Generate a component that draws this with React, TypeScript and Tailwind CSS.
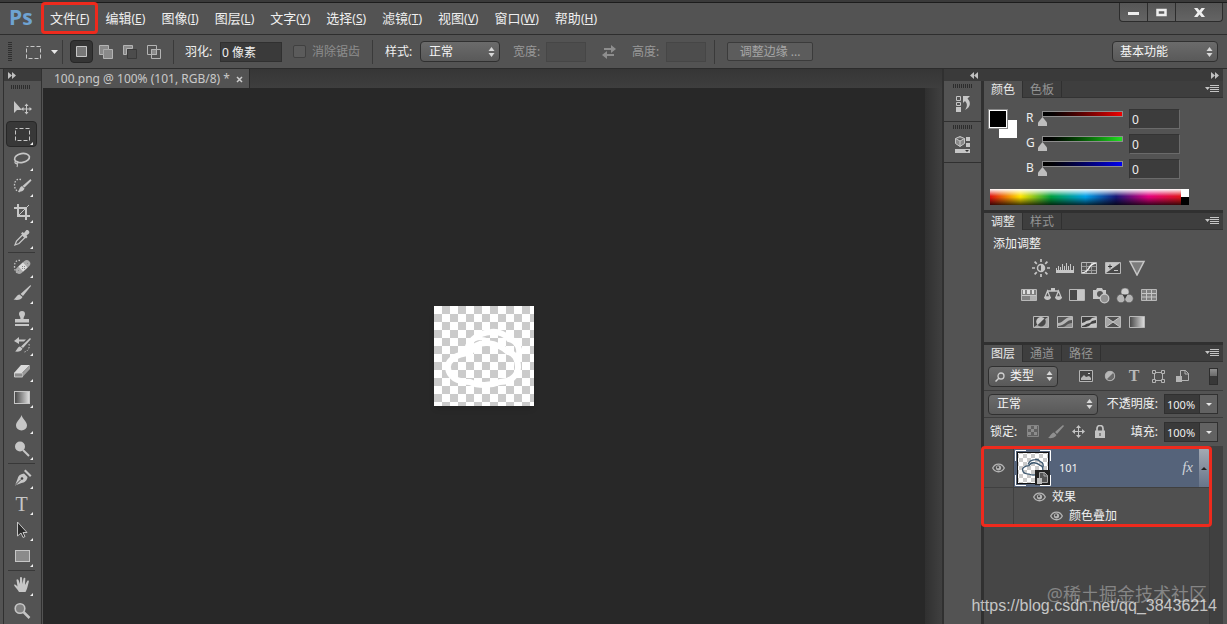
import React from "react";

const Svg = ({ w = 20, h = 20, children }: { w?: number; h?: number; children: React.ReactNode }) => (
  <svg width={w} height={h} viewBox={`0 0 ${w} ${h}`} fill="none" aria-hidden="true" className="block shrink-0">
    {children}
  </svg>
);

const L = "#c6c6c6";

const UpDown = () => (
  <svg width="7" height="10" viewBox="0 0 7 10" aria-hidden="true" className="pointer-events-none absolute right-1 top-1/2 -translate-y-1/2">
    <path d="M3.500 0L6.500 4H.5zM.5 6h6L3.500 10z" fill="#d8d8d8" />
  </svg>
);

function Select({ label, value, className, children }: { label: string; value: string; className: string; children?: React.ReactNode }) {
  return (
    <div className="relative h-[21px] rounded-sm border border-[#303030] bg-linear-to-b from-[#6b6b6b] to-[#595959] text-xs text-[#f4f4f4]">
      {children}
      <select aria-label={label} className={`block h-full appearance-none bg-transparent pr-3 outline-none ${className}`}>
        <option>{value}</option>
      </select>
      <UpDown />
    </div>
  );
}

const Divider = () => <div className="h-6 w-px shrink-0 bg-[#3a3a3a]" />;

const Grip = () => (
  <svg width="20" height="4" viewBox="0 0 20 4" aria-hidden="true" className="mx-auto block">
    {[0, 2, 4, 6, 8, 10, 12, 14, 16, 18].map((x) => (
      <rect key={x} x={x} width="1" height="4" fill="#2c2c2c" />
    ))}
  </svg>
);

/* ---------- tool icons ---------- */
const tools: Record<string, React.ReactNode> = {
  move: (
    <Svg>
      <path d="M2 3v12l3-3h5z" fill={L} />
      <path d="M14.500 7v8M10.500 11h8" stroke={L} />
      <path d="M14.500 5.500l2 2.500h-4zM14.500 16.500l2-2.500h-4zM9 11l2.500-2v4zM20 11l-2.500-2v4z" fill={L} />
    </Svg>
  ),
  marquee: (
    <Svg>
      <rect x="3.500" y="4.500" width="14" height="12" stroke={L} strokeDasharray="4 2" strokeDashoffset="2" />
    </Svg>
  ),
  lasso: (
    <Svg>
      <ellipse cx="10" cy="8" rx="7.500" ry="4.500" stroke={L} strokeWidth="1.700" transform="rotate(-10 10 8)" />
      <path d="M4 11c-2 1-1 3 1 2.500s1-2.500-1-2M5 13.500c.5 1 1 2 0 3.500" stroke={L} strokeWidth="1.200" />
    </Svg>
  ),
  quick: (
    <Svg>
      <path d="M9 3.500C5 2.500 2.500 5 2.500 9S5 16 8 15.500" stroke={L} strokeWidth="1.300" strokeDasharray="1.500 1.500" />
      <path d="M18.500 3l1 1.500-7 7-2-1.500zM10 10l2.500 2.500c-1 3-4 3.500-6.500 3 1.500-1.500 1.500-4.500 4-5.500z" fill={L} />
    </Svg>
  ),
  crop: (
    <Svg>
      <path d="M6 2v12h12M2 6h12v12" stroke={L} strokeWidth="2" />
      <path d="M7 13L17 3" stroke={L} />
    </Svg>
  ),
  eyedropper: (
    <Svg>
      <path d="M3 17l1.500-4 6-6 2.500 2.500-6 6z" stroke={L} strokeWidth="1.300" />
      <path d="M9 5.500l1.500-1.500 1.500 1 2-2.500c1.500-1.500 4.500 1 3 3l-2.500 2 1 1.500-1.500 1.500z" fill={L} />
    </Svg>
  ),
  heal: (
    <Svg>
      <path d="M8 3.500C4.500 3 2.500 5 2.500 9s1 6 3.500 7" stroke={L} strokeWidth="1.300" strokeDasharray="1.500 1.500" />
      <rect x="2.500" y="6.500" width="17" height="7" rx="3.500" fill="#aaa" transform="rotate(-42 11 10)" />
      <rect x="8" y="6.500" width="6" height="7" fill="#dedede" transform="rotate(-42 11 10)" />
      <path d="M10 9h1v1h-1zM12 9h1v1h-1zM10 11h1v1h-1zM12 11h1v1h-1zM6 13h1v1H6zM15 6h1v1h-1z" fill="#888" />
    </Svg>
  ),
  brush: (
    <Svg>
      <path d="M18.500 2l.5 1-8 10-2.500-2zM7.500 11.500l3 2.500c-1 3-5.500 3.500-9 2.500 2.500-1 3-4.500 6-5z" fill={L} />
    </Svg>
  ),
  stamp: (
    <Svg>
      <path d="M10 2a3 3 0 013 3c0 2-1.500 2.500-1.500 5H17v3.500H3V10h5.500C8.500 7.500 7 7 7 5a3 3 0 013-3zM3 15h14v2H3z" fill={L} />
    </Svg>
  ),
  history: (
    <Svg>
      <path d="M2 6l5-4v2.500h7L12 6.500H7V9z" fill={L} />
      <path d="M18 3l1 1-8 9-2-1.500zM8 11.500l2.500 2C9.500 16.500 6 17 3 16.500c2-1 2.500-4.500 5-5z" fill={L} />
      <path d="M17 9c1 4-1 7-4.500 8" stroke={L} strokeDasharray="1.500 1.500" />
    </Svg>
  ),
  eraser: (
    <Svg>
      <path d="M9 4h9l-8 8H2z" fill="#dadada" />
      <path d="M2.500 12h8v4h-8z" fill="#8c8c8c" stroke="#ddd" strokeWidth=".8" />
      <path d="M10.500 12L18 4v4l-7.500 8z" fill="#9c9c9c" />
    </Svg>
  ),
  gradient: (
    <Svg>
      <defs>
        <linearGradient id="gt">
          <stop stopColor="#444" />
          <stop offset="1" stopColor="#e0e0e0" />
        </linearGradient>
      </defs>
      <rect x="2.500" y="4.500" width="15" height="12" fill="url(#gt)" stroke={L} />
    </Svg>
  ),
  blur: (
    <Svg>
      <path d="M9.500 2c1 4 5.500 6.500 5.500 10.500a5.500 5 0 01-11 0C4 8.500 8.500 6 9.500 2z" fill={L} />
    </Svg>
  ),
  dodge: (
    <Svg>
      <circle cx="8" cy="7.500" r="5" fill={L} />
      <path d="M11 11l6 6" stroke={L} strokeWidth="2" />
    </Svg>
  ),
  pen: (
    <Svg>
      <path d="M12 5.500l3.500 3.500c-.5 4-3 5.500-6 6L3 17.500 5.500 11c.5-3 2.500-5 6.500-5.500z" fill={L} />
      <path d="M12 3l1.500-1.500 6 6L18 9z" fill={L} />
      <path d="M3.500 17L9 11.500" stroke="#444" />
      <circle cx="10" cy="10.500" r="1.300" fill="#444" />
    </Svg>
  ),
  type: <span className="font-['Liberation_Serif',serif] text-xl leading-5 text-[#c6c6c6]">T</span>,
  path: (
    <Svg>
      <path d="M5.500 2v14l3.500-3 2 4.500 2-1-2-4h4z" fill="#2b2b2b" stroke={L} />
    </Svg>
  ),
  rect: (
    <Svg>
      <rect x="3.500" y="4.500" width="14" height="11" fill="#8b8b8b" stroke={L} />
    </Svg>
  ),
  hand: (
    <Svg>
      <path
        d="M7 17c-1.500-3-4-4.500-5-7 1-1 2 0 3.500 1.500L4.500 5c0-1 1.500-1 2 0l1.500 4L8 3c0-1.500 2-1.500 2 0l.5 6 1-5.500c.5-1.200 2-1 1.800.3L13 10l2.200-4c.8-1 2-.3 1.600.8L15.500 12c-.5 2-1 3-2 5z"
        fill={L}
      />
    </Svg>
  ),
  zoom: (
    <Svg>
      <circle cx="8" cy="7.500" r="4.800" fill="#808080" stroke={L} strokeWidth="1.600" />
      <path d="M11.500 11l6 6" stroke={L} strokeWidth="2.500" />
    </Svg>
  ),
};

const toolGroups: [string, string][][] = [
  [["move", "移动"], ["marquee", "矩形选框"], ["lasso", "套索"], ["quick", "快速选择"], ["crop", "裁剪"], ["eyedropper", "吸管"]],
  [["heal", "污点修复"], ["brush", "画笔"], ["stamp", "仿制图章"], ["history", "历史记录画笔"], ["eraser", "橡皮擦"], ["gradient", "渐变"], ["blur", "模糊"], ["dodge", "减淡"]],
  [["pen", "钢笔"], ["type", "文字"], ["path", "路径选择"], ["rect", "矩形"]],
  [["hand", "抓手"], ["zoom", "缩放"]],
];

function Toolbar() {
  return (
    <aside className="flex w-[39px] shrink-0 flex-col border-x border-[#303030] bg-[#535353]">
      <button aria-label="展开工具栏" className="flex h-3 items-center bg-[#3b3b3b] pl-1">
        <Svg w={8} h={7}>
          <path d="M0 0l4 3.500L0 7zM4 0l4 3.500L4 7z" fill="#c0c0c0" />
        </Svg>
      </button>
      <div className="pb-1.5 pr-1 pt-1">
        <Grip />
      </div>
      {toolGroups.map((group, i) => (
        <div key={i} className="pr-0.5">
          {i > 0 && <hr className="mx-1 my-px border-[#383838]" />}
          {group.map(([id, name]) => (
            <button
              key={id}
              aria-label={name}
              className={`relative mx-auto flex h-[26px] w-[31px] items-center justify-center rounded-sm border ${
                id === "marquee" ? "border-[#272727] bg-[#383838]" : "border-transparent"
              }`}
            >
              {tools[id]}
              {id !== "move" && id !== "zoom" && (
                <svg width="3" height="3" className="absolute bottom-px right-[3px]" aria-hidden="true">
                  <path d="M3 0v3H0z" fill="#f0f0f0" />
                </svg>
              )}
            </button>
          ))}
        </div>
      ))}
    </aside>
  );
}

/* ---------- menu bar ---------- */
const menus = [["文件", "F"], ["编辑", "E"], ["图像", "I"], ["图层", "L"], ["文字", "Y"], ["选择", "S"], ["滤镜", "T"], ["视图", "V"], ["窗口", "W"], ["帮助", "H"]];

function MenuBar() {
  return (
    <header className="flex h-8 shrink-0 items-start border-b border-[#2e2e2e] bg-[#535353]">
      <span className="w-[42px] pl-[9px] pt-0.5 font-['Open_Sans','Noto_Sans',sans-serif] text-[21px] font-bold leading-6 text-[#6fa3d2]">Ps</span>
      <nav className="flex h-[31px] items-center">
        {menus.map(([name, key], i) => (
          <button key={key} className="relative h-[31px] whitespace-nowrap px-2 text-[13px] text-[#efefef]">
            {name}
            <span className="text-xs">
              (<u>{key}</u>)
            </span>
            {i === 0 && <span className="absolute -left-px -right-px -top-px bottom-0 rounded-sm border-3 border-[#ee2a1d]" />}
          </button>
        ))}
      </nav>
      <div className="ml-auto mr-1 flex h-[19px] rounded-b-sm border border-t-0 border-[#2c2c2c] bg-linear-to-b from-[#565656] to-[#646464]">
        <button aria-label="最小化" className="flex w-7 items-center justify-center border-r border-[#2c2c2c]">
          <Svg w={11} h={10}><path d="M0 5h11v3H0z" fill="#eee" /></Svg>
        </button>
        <button aria-label="最大化" className="flex w-7 items-center justify-center border-r border-[#2c2c2c]">
          <Svg w={11} h={9}><path d="M1.500 2h8v5h-8z" stroke="#eee" strokeWidth="2.500" /></Svg>
        </button>
        <button aria-label="关闭" className="flex w-[46px] items-center justify-center">
          <Svg w={11} h={9}><path d="M0 0h3.500l2 2.500 2-2.500H11L7.500 4.500 11 9H7.500l-2-2.500-2 2.500H0l3.500-4.500z" fill="#eee" /></Svg>
        </button>
      </div>
    </header>
  );
}

function OptionsBar() {
  return (
    <div className="flex h-[34px] shrink-0 items-center border-b border-[#2c2c2c] bg-[#535353] text-xs text-[#f0f0f0]">
      <svg width="4" height="20" className="ml-2 shrink-0" aria-hidden="true">
        {[0, 2, 4, 6, 8, 10, 12, 14, 16, 18].map((y) => (
          <rect key={y} y={y} width="4" height="1" fill="#2f2f2f" />
        ))}
      </svg>
      <button aria-label="工具预设" className="ml-[11px] flex items-center gap-2">
        {tools.marquee}
        <Svg w={7} h={4}><path d="M0 0h7L3.500 4z" fill="#e8e8e8" /></Svg>
      </button>
      <div className="ml-1 mr-[7px]"><Divider /></div>
      <div className="flex gap-px">
        <button aria-label="新选区" className="flex size-[23px] items-center justify-center rounded-sm border border-[#272727] bg-[#353535]">
          <Svg w={11} h={11}><path d="M.5.5h10v10H.5z" fill="#777" stroke={L} /></Svg>
        </button>
        <button aria-label="添加到选区" className="flex size-[23px] items-center justify-center">
          <Svg w={14} h={14}>
            <path d="M.5.5h9v4h4v9h-9v-4h-4z" fill="#8a8a8a" stroke="#b4b4b4" />
            <path d="M4.500 9V4.500H9" stroke="#aaa" />
          </Svg>
        </button>
        <button aria-label="从选区减去" className="flex size-[23px] items-center justify-center">
          <Svg w={14} h={14}>
            <path d="M4.500 4.500h9v9h-9z" fill="#4c4c4c" stroke="#3a3a3a" />
            <path d="M.5.5h9v3h-6v6h-3z" fill="#8a8a8a" stroke="#b4b4b4" />
          </Svg>
        </button>
        <button aria-label="与选区交叉" className="flex size-[23px] items-center justify-center">
          <Svg w={14} h={14}>
            <path d="M.5.5h9v9h-9zM4.500 4.500h9v9h-9z" stroke="#b4b4b4" />
            <path d="M4.500 4.500h5v5h-5z" fill="#8a8a8a" stroke="#b4b4b4" />
          </Svg>
        </button>
      </div>
      <div className="ml-2 mr-[11px]"><Divider /></div>
      <label htmlFor="feather" className="w-[35px] whitespace-nowrap">羽化:</label>
      <input id="feather" defaultValue="0 像素" className="h-5 w-[62px] border border-[#303030] bg-[#3a3a3a] px-px outline-none" />
      <label className="ml-[11px] flex items-center gap-1.5 whitespace-nowrap text-[#8e8e8e]">
        <input type="checkbox" disabled className="size-[13px] appearance-none rounded-xs border border-[#404040] bg-[#5b5b5b]" />
        消除锯齿
      </label>
      <div className="mx-3"><Divider /></div>
      <span className="w-[35px] whitespace-nowrap">样式:</span>
      <Select label="样式" value="正常" className="w-[78px] pl-2" />
      <label htmlFor="sel-w" className="ml-[13px] w-[33px] whitespace-nowrap text-[#999]">宽度:</label>
      <input id="sel-w" disabled className="h-5 w-10 border border-[#464646] bg-[#4d4d4d]" />
      <button aria-label="高度和宽度互换" className="mx-4">
        <Svg w={14} h={14}><path d="M2 3h7V0l5 4-5 4V5H2zM12 9H5V6l-5 4 5 4v-3h7z" fill="#8e8e8e" /></Svg>
      </button>
      <label htmlFor="sel-h" className="w-[34px] whitespace-nowrap text-[#999]">高度:</label>
      <input id="sel-h" disabled className="h-5 w-10 border border-[#464646] bg-[#4d4d4d]" />
      <div className="ml-2 mr-3"><Divider /></div>
      <button disabled className="h-[19px] w-[86px] whitespace-nowrap rounded-xs border border-[#3b3b3b] bg-[#5c5c5c] leading-4 text-[#a6a6a6]">调整边缘 ...</button>
      <div className="ml-auto mr-[9px]">
        <Select label="工作区" value="基本功能" className="w-[104px] pl-[7px]" />
      </div>
    </div>
  );
}

/* ---------- document ---------- */
const cloudFront = "M36 47C20 48 13 56 14 62c1 9 9 14 22 14 8 4 20 4 30 0 10 0 18-6 18-15 0-8-4-14-10-15C64 37 44 31 36 47z";
const cloudBack = "M33 43C36 33 45 27 57 26c8-1 15 3 18 7 9 2 13 12 8 20";

const Checker = ({ id, size }: { id: string; size: number }) => (
  <pattern id={id} width={size * 2} height={size * 2} patternUnits="userSpaceOnUse">
    <path d={`M0 0h${size * 2}v${size * 2}H0z`} fill="#fff" />
    <path d={`M${size} 0h${size}v${size}H${size}zM0 ${size}h${size}v${size}H0z`} fill="#cbcbcb" />
  </pattern>
);

function DocumentArea() {
  return (
    <main className="flex min-w-0 flex-1 flex-col pl-px">
      <div className="flex h-[19px] shrink-0 bg-linear-to-b from-[#363636] to-[#3e3e3e]">
        <div className="flex items-center gap-1.5 border-r border-[#2a2a2a] bg-[#535353] pl-[11px] pr-1.5 pt-px font-['Noto_Sans',sans-serif] text-xs text-[#c9c9c9]">
          <span className="whitespace-nowrap">100.png @ 100% (101, RGB/8) *</span>
          <button aria-label="关闭文档">
            <Svg w={7} h={7}><path d="M1 1l5 5M6 1L1 6" stroke="#ccc" strokeWidth="1.500" /></Svg>
          </button>
        </div>
      </div>
      <div className="flex min-h-0 flex-1">
        <div className="flex flex-1 items-center justify-center bg-[#282828]">
          <svg width="100" height="100" viewBox="0 0 100 100" fill="none" className="shadow-md" role="img" aria-label="图层 101">
            <defs><Checker id="ck8" size={8} /></defs>
            <rect width="100" height="100" fill="url(#ck8)" />
            <path d={cloudFront} stroke="#fff" strokeWidth="6" strokeLinejoin="round" />
            <path d={cloudBack} stroke="#fff" strokeWidth="6" strokeLinecap="round" />
            <path d="M40 34c5-2 10-2 14 0" stroke="#fff" strokeWidth="3" />
          </svg>
        </div>
        <div className="w-[17px] bg-linear-to-r from-[#303030] to-[#404040]" />
      </div>
    </main>
  );
}

/* ---------- panels ---------- */
function Tabs({ names }: { names: string[] }) {
  return (
    <div className="flex h-[17px] shrink-0 border-b border-[#333] bg-[#3e3e3e] text-xs">
      {names.map((n, i) => (
        <button
          key={n}
          className={`whitespace-nowrap border-r border-[#303030] px-[7px] leading-[18px] ${i === 0 ? "-mb-px bg-[#535353] text-[#e8e8e8]" : "text-[#949494]"}`}
        >
          {n}
        </button>
      ))}
      <button aria-label={`${names[0]}面板菜单`} className="ml-auto mr-1 self-center">
        <Svg w={14} h={8}><path d="M0 2h5L2.500 5zM5 0h9v1H5zM5 2h9v1H5zM5 4h9v1H5zM5 6h9v1H5z" fill="#c4c4c4" /></Svg>
      </button>
    </div>
  );
}

const channels = [
  ["R", "from-black to-[#f00000]"],
  ["G", "from-black to-[#20e020]"],
  ["B", "from-black to-[#0000f0]"],
];

function ColorPanel() {
  return (
    <section className="flex h-[129px] shrink-0 flex-col bg-[#535353]">
      <Tabs names={["颜色", "色板"]} />
      <div className="flex pl-1 pt-[11px]">
        <div className="relative h-8 w-[38px]">
          <button aria-label="背景色" className="absolute left-[11px] top-[11px] size-[18px] bg-white" />
          <button aria-label="前景色" className="absolute left-0 top-0 size-5 border border-[#888] bg-black ring-1 ring-inset ring-white" />
        </div>
        <div className="flex flex-col gap-[5px]">
          {channels.map(([c, grad]) => (
            <div key={c} className="flex h-5 text-xs text-[#eee]">
              <label htmlFor={`ch-${c}`} className="w-4 font-['Noto_Sans',sans-serif] leading-[18px]">{c}</label>
              <div className="w-[87px] pt-0.5">
                <div className={`h-1.5 w-[81px] border border-[#8c8c8c] bg-linear-to-r ${grad}`} />
                <input
                  id={`ch-${c}`}
                  type="range"
                  min="0"
                  max="255"
                  defaultValue="0"
                  className="-ml-1 block h-[9px] w-[89px] appearance-none bg-transparent [&::-webkit-slider-thumb]:h-[9px] [&::-webkit-slider-thumb]:w-[9px] [&::-webkit-slider-thumb]:appearance-none [&::-webkit-slider-thumb]:bg-[#bdbdbd] [&::-webkit-slider-thumb]:[clip-path:polygon(50%_0,100%_60%,100%_100%,0_100%,0_60%)]"
                />
              </div>
              <input aria-label={`${c} 值`} defaultValue="0" className="h-5 w-[51px] border border-[#343434] border-b-[#6a6a6a] border-r-[#6a6a6a] bg-[#3c3c3c] px-0.5 font-['Noto_Sans',sans-serif] outline-none" />
            </div>
          ))}
        </div>
      </div>
      <svg width="199" height="16" className="ml-1.5 mt-2.5 block" role="img" aria-label="RGB 色谱">
        <defs>
          <linearGradient id="hue">
            <stop stopColor="#e01010" />
            <stop offset=".16" stopColor="#ffe400" />
            <stop offset=".32" stopColor="#00a040" />
            <stop offset=".5" stopColor="#00a0e8" />
            <stop offset=".66" stopColor="#181878" />
            <stop offset=".83" stopColor="#e4007f" />
            <stop offset="1" stopColor="#e01818" />
          </linearGradient>
          <linearGradient id="lum" x2="0" y2="1">
            <stop stopColor="#fff" />
            <stop offset=".45" stopColor="#fff" stopOpacity="0" />
            <stop offset=".5" stopColor="#000" stopOpacity="0" />
            <stop offset="1" stopColor="#000" stopOpacity=".75" />
          </linearGradient>
        </defs>
        <path d="M0 0h191v16H0z" fill="url(#hue)" />
        <path d="M0 0h191v16H0z" fill="url(#lum)" />
        <path d="M191 0h8v8h-8z" fill="#fff" />
        <path d="M191 8h8v8h-8z" fill="#000" />
      </svg>
    </section>
  );
}

const Frame = ({ children, fill = "#555" }: { children?: React.ReactNode; fill?: string }) => (
  <Svg w={18} h={16}>
    <path d="M1.500 2.500h15v11h-15z" fill={fill} />
    {children}
    <path d="M1.500 2.500h15v11h-15z" stroke="#b8b8b8" />
  </Svg>
);

const adjustments: [string, React.ReactNode][][] = [
  [
    ["亮度/对比度", <Svg w={18} h={18}><circle cx="9" cy="9" r="3.500" stroke={L} strokeWidth="1.500" /><path d="M9 5.500a3.500 3.500 0 010 7z" fill={L} /><path d="M9 0v3M9 15v3M0 9h3M15 9h3M2.600 2.600l2.200 2.200M13.200 13.200l2.200 2.200M2.600 15.400l2.200-2.200M13.200 4.800l2.200-2.200" stroke={L} strokeWidth="1.700" /></Svg>],
    ["色阶", <Svg w={18} h={16}><path d="M0 10h18v3H0z" fill={L} /><path d="M.5 11V8M2.500 11V6M4.500 11V7M6.500 11V4M8.500 11V6M10.500 11V3M12.500 11V6M14.500 11V4M17.500 11V6" stroke={L} /></Svg>],
    ["曲线", <Frame><path d="M6.500 3v10M11.500 3v10M2 6.500h14M2 10.500h14" stroke="#999" /><path d="M2 13c9-1 5-9 14-10" stroke="#eee" strokeWidth="1.500" /></Frame>],
    ["曝光度", <Frame fill="#484848"><path d="M2 3h14L2 13z" fill={L} /><path d="M4 6.500h4M6 4.500v4" stroke="#333" /><path d="M10 10.500h4" stroke={L} /></Frame>],
    ["自然饱和度", <Svg w={18} h={16}><path d="M2 1.500h14L9 15z" fill="#7c7c7c" stroke={L} strokeWidth="1.500" /></Svg>],
  ],
  [
    ["色相/饱和度", <Frame fill="#808080"><path d="M3 3h2v4H3zM7 3h3v4H7zM12 3h2v4h-2z" fill="#ddd" /><path d="M2 8.500h14" stroke={L} /><path d="M10 9h6v4h-6z" fill="#b0b0b0" /></Frame>],
    ["色彩平衡", <Svg w={18} h={16}><path d="M9 1v3M3 4h12M3.500 4L1 10h5zM14.500 4L12 10h5z" stroke={L} strokeWidth="1.300" /><path d="M0 10h7c0 4-7 4-7 0zM11 10h7c0 4-7 4-7 0zM7 1h4v3H7z" fill={L} /></Svg>],
    ["黑白", <Frame fill="#484848"><path d="M9 3h7v10H9z" fill={L} /></Frame>],
    ["照片滤镜", <Svg w={18} h={17}><path d="M1 3h3l1-2h5l1 2h3v9H1z" fill={L} /><circle cx="8" cy="7" r="3" fill="#555" /><circle cx="12.500" cy="11.500" r="4.300" fill="#909090" stroke={L} strokeWidth="1.300" /></Svg>],
    ["通道混合器", <Svg w={18} h={17}><circle cx="9" cy="5" r="4" fill="#ccc" stroke="#666" strokeWidth=".5" /><circle cx="5" cy="11.500" r="4.300" fill="#b5b5b5" stroke="#555" strokeWidth=".7" /><circle cx="13" cy="11.500" r="4.300" fill="#b5b5b5" stroke="#555" strokeWidth=".7" /><path d="M6.500 7.500h5L9 12z" fill="#3c3c3c" /></Svg>],
    ["颜色查找", <Frame fill="#808080"><path d="M2 6.500h14M2 10h14M6.500 3v10M11.500 3v10" stroke={L} /></Frame>],
  ],
  [
    ["反相", <Frame fill="#484848"><path d="M16 3v10H2z" fill="#aaa" /><path d="M12.500 4.500a4 4 0 01-7 6.500z" fill="#484848" /><path d="M12.500 4.500a4 4 0 00-7 6.500z" fill={L} /></Frame>],
    ["色调分离", <Frame fill="#555"><path d="M2 9c6 0 6-6 13-6h1v3c-6 0-6 5-14 6z" fill="#b5b5b5" /><path d="M7 13c3 0 4-4 9-4v4z" fill="#929292" /></Frame>],
    ["阈值", <Frame fill="#404040"><path d="M2 9l3-1 1-1 4-1 2-2 4-1v3l-4 1-2 2-4 1-1 1-3 1zM6 13l3-1 2-2 5-1v4z" fill={L} /></Frame>],
    ["可选颜色", <Frame fill="#505050"><path d="M2 3l7 5-7 5zM16 3L9 8l7 5z" fill="#a4a4a4" /><path d="M2 3l14 10M16 3L2 13" stroke={L} /></Frame>],
    ["渐变映射", <Frame fill="url(#gt)" />],
  ],
];

function AdjustPanel() {
  return (
    <section className="flex h-[129px] shrink-0 flex-col bg-[#535353]">
      <Tabs names={["调整", "样式"]} />
      <h2 className="pl-[9px] pt-1 text-xs leading-5 text-[#f2f2f2]">添加调整</h2>
      <div className="flex flex-col gap-[7px] pr-[30px] pt-1">
        {adjustments.map((row, i) => (
          <div key={i} className="flex justify-center">
            {row.map(([name, icon]) => (
              <button key={name} aria-label={name} className="flex h-5 w-6 items-center justify-center">{icon}</button>
            ))}
          </div>
        ))}
      </div>
    </section>
  );
}

const Eye = () => (
  <Svg w={13} h={10}>
    <path d="M.7 5C3-.2 10-.2 12.300 5 10 10 3 10 .7 5z" stroke="#b4b4b4" strokeWidth="1.300" />
    <circle cx="6.500" cy="4.800" r="2.600" fill="#b4b4b4" />
    <circle cx="6" cy="4.300" r="1.100" fill="#444" />
  </Svg>
);

function Percent({ label }: { label: string }) {
  return (
    <div className="flex items-center">
      <label htmlFor={label} className="mr-1.5 whitespace-nowrap">{label}:</label>
      <input id={label} defaultValue="100%" className="h-5 w-9 border border-[#303030] bg-[#3a3a3a] pl-0.5 font-['Noto_Sans',sans-serif] text-[11px] outline-none" />
      <button aria-label={`${label}滑块`} className="flex h-5 w-[18px] items-center justify-center border border-l-0 border-[#303030] bg-[#626262]">
        <Svg w={6} h={3}><path d="M0 0h6L3 3z" fill="#e8e8e8" /></Svg>
      </button>
    </div>
  );
}

const filters: [string, React.ReactNode][] = [
  ["像素图层", <Svg w={14} h={12}><path d="M.5.5h13v11H.5z" fill="#444" stroke="#b4b4b4" /><path d="M2 10V8l3-3 2 2 3-1 2 2v2z" fill="#b4b4b4" /><path d="M9 3h2v1H9z" fill="#ccc" /></Svg>],
  ["调整图层", <Svg w={12} h={12}><circle cx="6" cy="6" r="5" fill="#b8b8b8" /><path d="M9.500 2.500l-7 7a5 5 0 007-7z" fill="#6a6a6a" /><circle cx="6" cy="6" r="4.700" stroke="#b0b0b0" /></Svg>],
  ["文字图层", <span className="font-['Liberation_Serif',serif] text-base font-bold leading-4 text-[#b8b8b8]">T</span>],
  ["形状图层", <Svg w={13} h={13}><path d="M2.500 2.500h8v8h-8z" stroke="#b4b4b4" /><path d="M.5.500h3v3h-3zM9.500.500h3v3h-3zM.5 9.500h3v3h-3zM9.500 9.500h3v3h-3z" fill="#535353" stroke="#b4b4b4" /></Svg>],
  ["智能对象", <Svg w={13} h={13}><path d="M4.500.5h5l3 3v7h-8z" stroke="#b4b4b4" /><path d="M9 0v4h4" stroke="#b4b4b4" /><path d="M0 6h6v6H0z" fill="#b4b4b4" /></Svg>],
];

function LayersPanel() {
  return (
    <section className="flex min-h-0 flex-1 flex-col bg-[#535353] text-xs text-[#f0f0f0]">
      <Tabs names={["图层", "通道", "路径"]} />
      <div className="flex h-[29px] shrink-0 items-center border-b border-[#3c3c3c] pl-1 pr-1">
        <Select label="滤镜类型" value="类型" className="w-[68px] pl-[21px]">
          <svg width="10" height="10" viewBox="0 0 10 10" className="pointer-events-none absolute left-1.5 top-[5px]" fill="none" aria-hidden="true">
            <circle cx="6" cy="4" r="3" stroke="#d0d0d0" strokeWidth="1.300" />
            <path d="M4 6L.5 9.500" stroke="#d0d0d0" strokeWidth="1.500" />
          </svg>
        </Select>
        <div className="ml-4 flex">
          {filters.map(([n, icon]) => (
            <button key={n} aria-label={n} className="flex h-5 w-6 items-center justify-center">{icon}</button>
          ))}
        </div>
        <button aria-label="打开图层过滤" className="ml-auto mr-px h-[17px] w-[9px] border border-[#2e2e2e] bg-[#383838]">
          <span className="block h-[7px] bg-linear-to-b from-[#909090] to-[#6a6a6a]" />
          <span className="block h-2" />
        </button>
      </div>
      <div className="flex h-[27px] shrink-0 items-center justify-between border-b border-[#3c3c3c] pl-1 pr-[5px]">
        <Select label="混合模式" value="正常" className="w-[108px] pl-2" />
        <Percent label="不透明度" />
      </div>
      <div className="flex h-7 shrink-0 items-center pl-1.5 pr-[5px]">
        <span className="w-[31px] whitespace-nowrap">锁定:</span>
        <div className="flex">
          <button aria-label="锁定透明像素" className="flex w-6 justify-center"><Svg w={12} h={12}><path d="M.5.5h11v11H.5z" fill="#616161" stroke="#858585" /><path d="M1 1h3v3H1zM7 1h3v3H7zM4 4h3v3H4zM1 7h3v3H1zM7 7h3v3H7z" fill="#8c8c8c" /></Svg></button>
          <button aria-label="锁定图像像素" className="flex w-[22px] justify-center"><Svg w={16} h={14}><path d="M15 0l1 1-7 8-2-2zM6 7.500L8.500 10C7 13 3 13.500 0 13c2-1 3-5 6-5.500z" fill="#909090" /></Svg></button>
          <button aria-label="锁定位置" className="flex w-[22px] justify-center"><Svg w={13} h={13}><path d="M6.500 2v9M2 6.500h9" stroke="#c4c4c4" /><path d="M6.500 0L9 3H4zM6.500 13L9 10H4zM0 6.500L3 4v5zM13 6.500L10 4v5z" fill="#c4c4c4" /></Svg></button>
          <button aria-label="锁定全部" className="flex w-[22px] justify-center"><Svg w={12} h={13}><path d="M3 6V3.500a3 3 0 016 0V6" stroke="#c4c4c4" strokeWidth="1.700" /><path d="M1 5.500h10V13H1z" fill="#c4c4c4" /><path d="M5.500 8h1v3h-1z" fill="#444" /></Svg></button>
        </div>
        <div className="ml-auto"><Percent label="填充" /></div>
      </div>
      <div className="relative flex min-h-0 flex-1 bg-[#464646]">
        <div className="flex-1 pt-[3px]">
          <div className="flex h-[39px] border-b border-[#404040] bg-[#55637a]">
            <button aria-label="图层可见性" className="flex w-[30px] items-center justify-center border-r border-[#404040] bg-[#505050]"><Eye /></button>
            <button aria-label="图层缩览图" className="p-px">
              <svg width="36" height="36" viewBox="0 0 36 36" fill="none" aria-hidden="true">
                <defs><Checker id="ck3" size={4} /></defs>
                <path d="M.5 11V.5H11M25 .5h10.500V11M.5 25v10.500H11M35.500 25v10.500H25" stroke="#fff" />
                <path d="M2 2h32v32H2z" fill="#111" />
                <path d="M3 3h30v30H3z" fill="url(#ck3)" />
                <g transform="translate(3.500 2) scale(.29)" stroke="#3c5870" strokeWidth="4.500">
                  <path d={cloudFront} />
                  <path d={cloudBack} />
                </g>
                <path d="M20 20h15v15H20z" fill="#222" />
                <path d="M24.500 22.500h5l3 3v7h-8z" fill="#555" stroke="#aaa" />
                <path d="M29 22v4h4" stroke="#aaa" />
                <path d="M22 28h5v6h-5z" fill="#bbb" />
              </svg>
            </button>
            <span className="ml-[7px] self-center font-['Noto_Sans',sans-serif] text-[11px]">101</span>
            <span className="ml-auto self-center pr-1.5 font-['Liberation_Serif',serif] text-[15px] italic text-[#cfd3d8]">fx</span>
            <button aria-label="折叠效果" className="flex w-2.5 items-center justify-center bg-linear-to-b from-[#a3a9b2] to-[#68758a]"><Svg w={6} h={3}><path d="M0 3h6L3 0z" fill="#222" /></Svg></button>
          </div>
          <div className="flex bg-[#505050]">
            <div className="w-[30px] border-r border-[#404040]" />
            <div>
              <div className="flex h-[18px] items-center gap-1.5 pl-[19px]"><Eye />效果</div>
              <div className="flex h-5 items-center gap-1.5 pl-9"><Eye />颜色叠加</div>
            </div>
          </div>
        </div>
        <div className="w-3.5 border-l border-[#3a3a3a] bg-[#404040]" />
        <div className="pointer-events-none absolute -left-[3px] right-[11px] top-0 h-[81px] rounded-sm border-3 border-[#ee2a1d]" />
      </div>
    </section>
  );
}

function RightDock() {
  return (
    <aside className="flex w-[281px] shrink-0 flex-col border-l-2 border-[#303030] bg-[#303030]">
      <div className="flex h-3 shrink-0 items-center bg-[#3a3a3a]">
        <button aria-label="展开面板" className="flex w-[34px] justify-end"><Svg w={8} h={7}><path d="M4 0L0 3.500 4 7zM8 0L4 3.500 8 7z" fill="#c0c0c0" /></Svg></button>
        <button aria-label="折叠为图标" className="ml-auto mr-1"><Svg w={8} h={7}><path d="M0 0l4 3.500L0 7zM4 0l4 3.500L4 7z" fill="#c0c0c0" /></Svg></button>
      </div>
      <div className="flex min-h-0 flex-1 gap-[3px]">
        <div className="flex w-[37px] shrink-0 flex-col gap-px">
          <div className="h-10 bg-[#535353] pt-[3px]">
            <Grip />
            <button aria-label="历史记录" className="mx-auto mt-1.5 block">
              <Svg w={18} h={18}>
                <path d="M2.500 2.500h4v4h-4zM2.500 8.500h4v3h-4z" stroke={L} />
                <path d="M2 13h5v5H2z" fill={L} />
                <path d="M9 2h7l-2.500 2.500C17 8 17 13 11 16c2-3 3-6 0-9L9 9z" fill={L} />
              </Svg>
            </button>
          </div>
          <div className="h-10 bg-[#535353] pt-[3px]">
            <Grip />
            <button aria-label="属性" className="mx-auto mt-1.5 block">
              <Svg w={18} h={18}>
                <path d="M6 1.500l4.500 2v5l-4.500 3-4.500-3v-5zM1.500 3.500L6 6l4.500-2.500M6 6v5.500" fill="#888" stroke={L} />
                <path d="M12 2h4v4h-4zM12 8h4v4h-4zM1 14h15v4H1z" fill={L} />
                <path d="M11 15h4l-2 2z" fill="#333" />
              </Svg>
            </button>
          </div>
          <div className="flex-1 bg-[#535353]" />
        </div>
        <div className="flex min-w-0 flex-1 flex-col gap-[3px]">
          <ColorPanel />
          <AdjustPanel />
          <LayersPanel />
        </div>
      </div>
    </aside>
  );
}

export default function App() {
  return (
    <div className="relative flex h-screen w-full flex-col overflow-hidden bg-[#535353] font-['Noto_Sans','Noto_Sans_CJK_SC',sans-serif]">
      <div className="h-[3px] shrink-0 border-b border-[#1c1c1c] bg-[#3a3a3a]" />
      <MenuBar />
      <OptionsBar />
      <div className="flex min-h-0 flex-1 pl-[3px] pr-1">
        <Toolbar />
        <DocumentArea />
        <RightDock />
      </div>
      <div className="pointer-events-none absolute bottom-4 right-5 whitespace-nowrap text-lg leading-7 text-white/35">@稀土掘金技术社区</div>
      <div className="pointer-events-none absolute bottom-1.5 right-2.5 whitespace-nowrap font-['Liberation_Sans',sans-serif] text-base leading-6 text-white/70">https://blog.csdn.net/qq_38436214</div>
    </div>
  );
}
